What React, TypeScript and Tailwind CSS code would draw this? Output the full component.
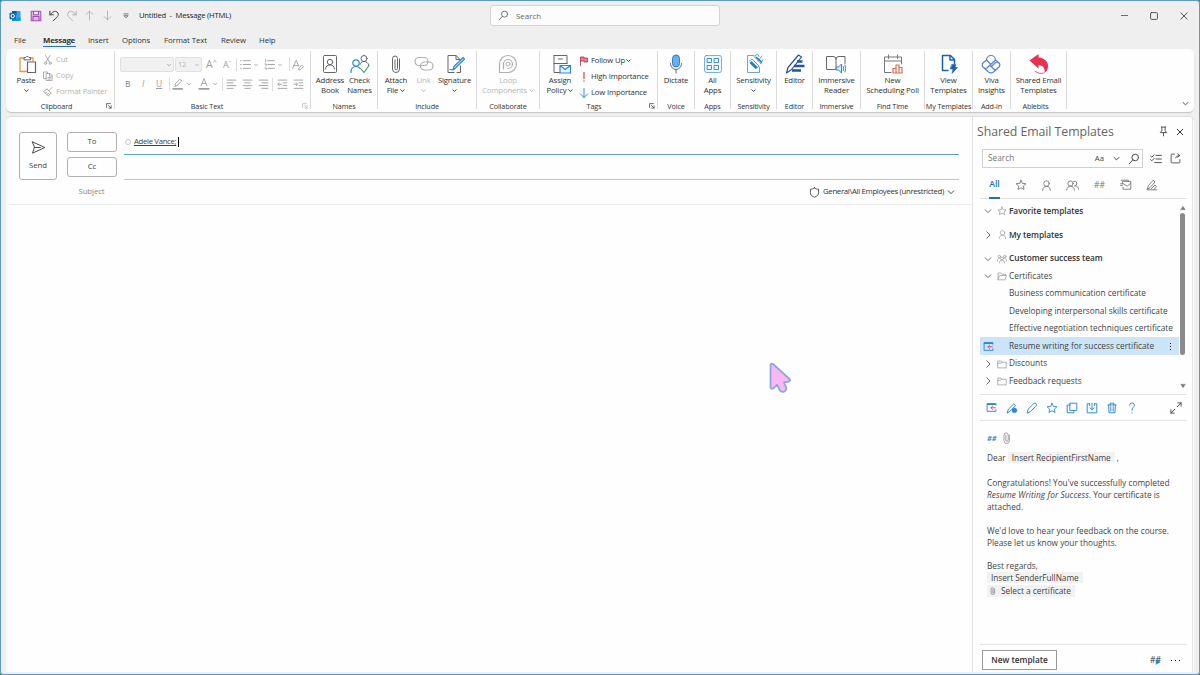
import type { ReactNode } from 'react';
import clsx from 'clsx';

interface IconProps {
  size?: number;
  className?: string;
  children?: ReactNode;
}

// icons are drawn on a 20x20 grid
function Icon({ size = 20, className, children }: IconProps) {
  return (
    <svg
      width={size}
      height={size}
      viewBox="0 0 20 20"
      fill="none"
      stroke="currentColor"
      strokeLinecap="round"
      strokeLinejoin="round"
      className={clsx('shrink-0', className)}
    >
      {children}
    </svg>
  );
}

function Chevron({ dir = 'down', size = 6, className }: { dir?: 'down' | 'right'; size?: number; className?: string }) {
  return (
    <Icon size={size} className={className}>
      <path strokeWidth={18 / size} d={dir === 'down' ? 'M3 7l7 7 7-7' : 'M7 2l8 8-8 8'} />
    </Icon>
  );
}

const STAR = 'M10 2l2.4 5.3 5.8.6-4.3 3.9 1.2 5.7L10 14.6l-5.1 2.9 1.2-5.7L1.8 7.9l5.8-.6z';

const Star = ({ size = 12, className }: IconProps) => (
  <Icon size={size} className={className}><path strokeWidth={1.5} d={STAR} /></Icon>
);

const Person = ({ size = 12, className }: IconProps) => (
  <Icon size={size} className={className}>
    <g strokeWidth={1.5}><circle cx="10" cy="6.500" r="5" /><path d="M3 19c.3-5 2.500-7.500 7-7.500s6.700 2.500 7 7.500" /></g>
  </Icon>
);

const People = ({ size = 12, className }: IconProps) => (
  <Icon size={size} className={className}>
    <g strokeWidth={1.4}><circle cx="7" cy="7" r="4" /><path d="M1 17c.4-4 3-6 6-6s5.600 2 6 6M12 3.500a3.600 3.600 0 1 1 1.500 7M14 10.500c3 0 5 2 5.300 5" /></g>
  </Icon>
);

const Team = ({ size = 11, className }: IconProps) => (
  <Icon size={size} className={className}>
    <g strokeWidth={1.4}>
      <circle cx="10" cy="9" r="3" /><path d="M5 18c0-4 2-6 5-6s5 2 5 6" />
      <circle cx="4.500" cy="5" r="2.600" /><circle cx="15.500" cy="5" r="2.600" />
      <path d="M1 14c0-4 1.500-6 4-6M19 14c0-4-1.500-6-4-6" />
    </g>
  </Icon>
);

const Folder = ({ open, className }: { open?: boolean; className?: string }) => (
  <Icon size={10} className={className}>
    <path strokeWidth={1.5} d={open ? 'M2 17V4h6l2 2.500h7V9M2 17L5 9h14l-3 8z' : 'M1.500 17V4h6l2 2.500h9V17zM1.500 8.500h6l2-2'} />
  </Icon>
);

const Magnifier = ({ size = 12, className }: IconProps) => (
  <Icon size={size} className={className}><g strokeWidth={1.600}><circle cx="12" cy="7.500" r="5.500" /><path d="M8 11.500L2 18" /></g></Icon>
);

const Clip = ({ size = 12, className }: IconProps) => (
  <Icon size={size} className={className}>
    <path strokeWidth={1.500} d="M8 5.500v8a2 2 0 0 0 4 0V5a3.500 3.500 0 0 0-7 0v9.500a4.500 4.500 0 0 0 9 0V5" />
  </Icon>
);

// window with a red arrow, used for "insert template"
const InsertTemplate = () => (
  <Icon size={11}>
    <path stroke="#2b88d8" strokeWidth={1.700} d="M18 6V3H2v14h16v-3" />
    <path stroke="#2b88d8" strokeWidth={3} d="M3 4h14" />
    <path stroke="#e8405c" strokeWidth={1.700} d="M17 10.500H9M12 7.500l-3 3 3 3" />
  </Icon>
);

const Launcher = ({ className }: { className?: string }) => (
  <Icon size={6} className={className}><path strokeWidth={2.500} d="M2 15V2h13M8 8l9 9M17 9v8H9" /></Icon>
);

interface GroupProps {
  label: string;
  className: string;
  labelClassName?: string;
  launcher?: 'dark' | 'light';
  children: ReactNode;
}

function Group({ label, className, labelClassName, launcher, children }: GroupProps) {
  return (
    <div className={clsx('relative mt-[2px] flex h-[58px] shrink-0 flex-col border-r border-[#dcdcdc]', className)}>
      <div className="flex h-[50px] shrink-0 justify-center">{children}</div>
      <div className={clsx('text-center text-[7.200px] leading-[10px] tracking-[-0.12px] whitespace-nowrap text-[#333]', labelClassName)}>{label}</div>
      {launcher && (
        <Launcher className={clsx('absolute right-[2px] bottom-0', launcher === 'dark' ? 'text-[#444]' : 'text-[#bbb]')} />
      )}
    </div>
  );
}

interface BigButtonProps {
  icon: ReactNode;
  lines: string[];
  caret?: 'inline' | 'below';
  disabled?: boolean;
  className?: string;
}

function BigButton({ icon, lines, caret, disabled, className }: BigButtonProps) {
  return (
    <div className={clsx('flex shrink-0 flex-col items-center text-[7.800px] leading-[10px] tracking-[-0.17px] whitespace-nowrap', disabled ? 'text-[#b8b8b8]' : 'text-[#333]', className)}>
      <div className="mt-[3px] mb-px h-5">{icon}</div>
      {lines.map((line, i) => (
        <div key={line} className="flex items-center gap-[2px]">
          {line}
          {caret === 'inline' && i === lines.length - 1 && <Chevron size={5} />}
        </div>
      ))}
      {caret === 'below' && <div className="flex h-[11px] items-center"><Chevron size={5} /></div>}
    </div>
  );
}

function TitleBar() {
  const cell = 'flex w-[18px] justify-center';
  return (
    <div className="flex h-[31px] shrink-0 items-center pl-[9px]">
      <svg width="12" height="12" viewBox="0 0 12 12" className="shrink-0">
        <rect x="3" y="1" width="8.500" height="10" rx="1" fill="#28a8ea" />
        <rect x="3" y="1" width="4.500" height="4" fill="#0358a7" />
        <path d="M3 7l4.500 2 4-2v4H3z" fill="#1490df" />
        <rect x=".5" y="2.800" width="6.500" height="6.500" rx=".8" fill="#0f6cbd" />
        <circle cx="3.750" cy="6" r="1.700" fill="none" stroke="#fff" strokeWidth="1" />
      </svg>
      <div className="ml-[5.500px] flex items-center text-[#b0b0b0]">
        <div className={cell}>
          <Icon size={12} className="text-[#a04fb0]"><path fill="#e3b5ea" strokeWidth={1.700} d="M2 2h15l1 1v15H2zM6 2v6h8V2M5 18v-7h10v7" /></Icon>
        </div>
        <div className={cell}>
          <Icon size={12} className="text-[#444]"><path strokeWidth={1.600} d="M3 2v6h6M3 8l5-4.500c3-2.300 7-1.500 8.500 1.500s.5 5-1.500 7L8.500 18" /></Icon>
        </div>
        <div className={cell}>
          <Icon size={12}><path strokeWidth={1.600} d="M17 2v6h-6M17 8l-5-4.500C9 1.200 5 2 3.500 5s-.5 5 1.500 7l6 6" /></Icon>
        </div>
        <div className={cell}><Icon size={11}><path strokeWidth={1.600} d="M10 18V2M4 8l6-6 6 6" /></Icon></div>
        <div className={cell}><Icon size={11}><path strokeWidth={1.600} d="M10 2v16M4 12l6 6 6-6" /></Icon></div>
        <div className={cell}><Icon size={6} className="text-[#555]"><path strokeWidth={2.500} d="M3 3h14M4 10l6 6 6-6z" /></Icon></div>
      </div>
      <div className="ml-[4.500px] w-[351px] text-[7.600px] tracking-[-0.17px] whitespace-pre text-[#222]">Untitled  -  Message (HTML)</div>
      <div className="flex h-[21px] w-[230px] items-center gap-[7px] rounded-[3px] border border-[#d4d4d4] bg-[#fcfcfc] pl-[7px] text-[8px] tracking-[-0.05px] text-[#666]">
        <Magnifier size={11} />
        Search
      </div>
      <div className="ml-auto flex items-center pr-[1px] text-[#444]">
        <div className="flex w-[30px] justify-center"><Icon size={7}><path strokeWidth={2.200} d="M1 10h18" /></Icon></div>
        <div className="flex w-[30px] justify-center"><Icon size={8}><rect x="1.500" y="1.500" width="17" height="17" rx="2.500" strokeWidth={2.200} /></Icon></div>
        <div className="flex w-[30px] justify-center"><Icon size={8}><path strokeWidth={2.200} d="M2 2l16 16M18 2L2 18" /></Icon></div>
      </div>
    </div>
  );
}

function MenuTabs() {
  return (
    <div className="flex h-[18px] shrink-0 pl-[14px] text-[7.800px] leading-[19px] tracking-[-0.08px] whitespace-nowrap text-[#333]">
      <div className="w-[29px]">File</div>
      <div className="w-[45px]">
        <div className="h-[16px] w-[33px] border-b-[1.500px] border-[#2a70b8] font-bold tracking-[-0.2px] text-[#333]">Message</div>
      </div>
      <div className="w-[34px]">Insert</div>
      <div className="w-[42px]">Options</div>
      <div className="w-[57px]">Format Text</div>
      <div className="w-[38px]">Review</div>
      <div>Help</div>
    </div>
  );
}

function ClipboardGroup() {
  const row = 'flex h-4 items-center gap-[3px]';
  return (
    <Group label="Clipboard" className="w-[109px]" labelClassName="pr-[7px]" launcher="dark">
      <BigButton
        className="w-[40px]"
        lines={['Paste']}
        caret="below"
        icon={
          <Icon className="ml-[3px]">
            <path stroke="#e8973a" strokeWidth={1.300} d="M9 17.500H2V4h4M12 4h3v3" />
            <path stroke="#666" d="M6 5.500V3.500h1.500a2 2 0 0 1 3.500 0h1.500v2z" />
            <path stroke="#666" strokeWidth={1.200} fill="#fff" d="M9.500 8h8v10.500h-8z" />
          </Icon>
        }
      />
      <div className="-ml-[3px] flex-1 pt-px text-[7.700px] tracking-[-0.17px] whitespace-nowrap text-[#b4b4b4]">
        <div className={row}>
          <Icon size={10} className="text-[#999]"><path strokeWidth={1.600} d="M5 1l8 13M14 1L6 14" /><circle cx="5" cy="16.500" r="2.300" strokeWidth={1.600} /><circle cx="14.500" cy="16.500" r="2.300" strokeWidth={1.600} /></Icon>
          Cut
        </div>
        <div className={row}>
          <Icon size={10} className="text-[#9a9a9a]"><path strokeWidth={1.600} d="M6 15H1V2h8v3M7 5h7l4 4v10H7zM13 5v5h5M10 13h5M10 16h5" /></Icon>
          Copy
        </div>
        <div className={row}>
          <Icon size={10} className="text-[#999]"><path strokeWidth={1.600} d="M18 1l-6 6M8 4l8 8M8 4L1 9l10 9 5-6M5 12l3-2M8 15l3-2" /></Icon>
          <span className="-mr-[5px]">Format Painter</span>
        </div>
      </div>
    </Group>
  );
}

function Lines({ d, caret = false }: { d: string; caret?: boolean }) {
  return (
    <>
      <Icon size={11}><path strokeWidth={1.700} d={d} /></Icon>
      {caret && <Chevron size={4} className="mx-[3px]" />}
    </>
  );
}

function BasicTextGroup() {
  const divider = 'h-[13px] w-px bg-[#dedede]';
  return (
    <Group label="Basic Text" className="w-[196px]" labelClassName="pr-[11px]" launcher="light">
      <div className="w-full pl-[5px] text-[#a0a0a0]">
        <div className="mt-[6px] flex h-[15px] items-center">
          <div className="flex h-[15px] w-[54px] items-center justify-end rounded-[2px] border border-[#e0e0e0] bg-[#f1f1f1] pr-[2px]"><Chevron size={4} /></div>
          <div className="ml-[1px] flex h-[15px] w-[27px] items-center justify-between rounded-[2px] border border-[#e0e0e0] bg-[#f1f1f1] px-[2px] text-[7.500px] tracking-[-0.2px] text-[#b8b8b8]">12<Chevron size={4} /></div>
          <div className="ml-[4px] w-[17px] text-[10.500px] leading-none">A<sup className="text-[7px]">^</sup></div>
          <div className="w-[13px] text-[9px] leading-none">A<sup className="text-[6px]">ˇ</sup></div>
          <div className={clsx(divider, 'mr-[3px]')} />
          <Lines caret d="M1 3h1M6 3h13M1 10h1M6 10h13M1 17h1M6 17h13" />
          <div className="w-[3px]" />
          <Lines caret d="M3 1v4M7 3h12M2 9h2v3M7 10h12M2 16h2v3M7 17h12" />
          <div className={clsx(divider, 'mr-[2px] ml-[4px]')} />
          <Icon size={12}><path strokeWidth={1.500} d="M1 16L7 2l4 10M3 11h7M11 16l5-6 3 3-5 5h-2z" /></Icon>
        </div>
        <div className="mt-[5px] flex h-[14px] items-center text-[8.500px]">
          <div className="w-[16px] pl-[5px] font-semibold">B</div>
          <div className="w-[16px] pl-[6px] italic">I</div>
          <div className="w-[17px] pl-[4px] underline">U</div>
          <div className={clsx(divider, 'mr-[2px]')} />
          <Icon size={12}><path strokeWidth={1.500} d="M6 13l-1-3 8-8 3 3-7 7zM4 14l2-1" /><path strokeWidth={3} d="M2 18h15" /></Icon>
          <Chevron size={4} className="mx-[3px]" />
          <div className="ml-[4px]"><Icon size={12}><path strokeWidth={1.500} d="M5 13L10 1l5 12M7 9h6" /><path strokeWidth={3} d="M2 18h16" /></Icon></div>
          <Chevron size={4} className="mx-[3px]" />
          <div className={clsx(divider, 'mr-[3px] ml-[2px]')} />
          <div className="flex items-center gap-[5px]">
            <Lines d="M2 2h16M2 7h11M2 12h16M2 17h11" />
            <Lines d="M2 2h16M5 7h10M2 12h16M5 17h10" />
            <Lines d="M2 2h16M7 7h11M2 12h16M7 17h11" />
          </div>
          <div className={clsx(divider, 'mr-[4px] ml-[3px]')} />
          <div className="flex items-center gap-[5px]">
            <Lines d="M2 2h16M11 7h7M11 12h7M2 17h16M8 9.500H2M4 7l-2 2.500L4 12" />
            <Lines d="M2 2h16M11 7h7M11 12h7M2 17h16M2 9.500h6M6 7l2 2.500L6 12" />
          </div>
        </div>
      </div>
    </Group>
  );
}

function TagsGroup() {
  const row = 'flex h-4 items-center gap-[2px]';
  return (
    <Group label="Tags" className="w-[118px]" labelClassName="pr-[9px]" launcher="dark">
      <BigButton
        className="w-[38px]"
        lines={['Assign', 'Policy']}
        caret="inline"
        icon={
          <Icon className="ml-px">
            <path stroke="#666" d="M3 1.500h13v8M3 1.500v17h6M3 9.500h13M7.500 5h4" />
            <path stroke="#2b88d8" strokeWidth={1.200} fill="#e8f3fc" d="M9 11.500h10.500v7.500H9zM9 11.500l5.200 4 5.300-4" />
          </Icon>
        }
      />
      <div className="w-[77px] pt-[1.500px] text-[7.700px] tracking-[-0.15px] whitespace-nowrap text-[#333]">
        <div className={row}>
          <Icon size={10}><path stroke="#c4314b" fill="#e87a8a" strokeWidth={1.700} d="M3 19V2h7v2h7v8h-7v-2H3" /></Icon>
          Follow Up <Chevron size={5} className="-ml-px" />
        </div>
        <div className={row}>
          <Icon size={10}><path stroke="#e0532f" strokeWidth={2.600} d="M10 1v12M10 18v.5" /></Icon>
          High Importance
        </div>
        <div className={row}>
          <Icon size={10}><path stroke="#2b88d8" strokeWidth={1.900} d="M10 1v18M3 12l7 7 7-7" /></Icon>
          Low Importance
        </div>
      </div>
    </Group>
  );
}

function Ribbon() {
  return (
    <div className="mx-[6px] flex h-[63px] shrink-0 rounded-[5px] bg-[#fefefe] shadow-[0_1px_1px_#c4c4c4]">
      <ClipboardGroup />
      <BasicTextGroup />
      <Group label="Names" className="w-[67px]">
        <BigButton
          className="w-[31px]"
          lines={['Address', 'Book']}
          icon={
            <Icon className="text-[#666]"><rect x="3.500" y="1.500" width="13" height="17" rx="1" /><circle cx="10" cy="8" r="2.700" /><path d="M5.500 15c.5-3 2-4 4.500-4s4 1 4.500 4" /></Icon>
          }
        />
        <BigButton
          className="w-[28px]"
          lines={['Check', 'Names']}
          icon={
            <Icon>
              <g stroke="#666"><circle cx="14" cy="4.500" r="3" /><path d="M10 10.500c.5-2 2-3 4-3s4.500 1 4.800 4" /></g>
              <g stroke="#2b88d8" strokeWidth={1.200}><circle cx="6" cy="9" r="3.200" /><path d="M1 18.500c0-4 2-6 5-6 1.500 0 3 .5 4 1.800" /></g>
              <path stroke="#3a9a5c" strokeWidth={1.100} d="M10.500 14.500l3.500 4 5-7" />
            </Icon>
          }
        />
      </Group>
      <Group label="Include" className="w-[99px]">
        <BigButton
          className="w-[29px]"
          lines={['Attach', 'File']}
          caret="inline"
          icon={<Icon className="text-[#666]"><path d="M13.500 5v10a3.500 3.500 0 0 1-7 0V4.500a2.500 2.500 0 0 1 5 0v10a1.200 1.200 0 0 1-2.500 0V6" /></Icon>}
        />
        <BigButton
          className="w-[26px]"
          lines={['Link']}
          caret="below"
          disabled
          icon={<Icon className="text-[#b0b0b0]"><rect x="1" y="3.500" width="13" height="8" rx="4" strokeWidth={1.200} /><rect x="6.500" y="8" width="12.500" height="8" rx="4" strokeWidth={1.200} /></Icon>}
        />
        <BigButton
          className="w-[36px]"
          lines={['Signature']}
          caret="below"
          icon={
            <Icon className="ml-px">
              <path stroke="#666" d="M9 18.500H3v-17h8l4 4M11 1.500v4h4M15.500 12v6.500H12" />
              <path stroke="#2b88d8" strokeWidth={1.200} fill="#d6eafa" d="M8 16l1-3.500 9-9 1.500 1.500-9 9zM5 15.500l3 .5" />
            </Icon>
          }
        />
      </Group>
      <Group label="Collaborate" className="w-[63px]">
        <BigButton
          lines={['Loop', 'Components']}
          caret="inline"
          disabled
          icon={<Icon className="text-[#b0b0b0]"><path strokeWidth={1.200} d="M1.500 18.500V10a8.500 8.500 0 1 1 8.500 8.500zM5.500 15V10a4.500 4.500 0 1 1 4.500 4.500" /><circle cx="10" cy="10" r="2" /></Icon>}
        />
      </Group>
      <TagsGroup />
      <Group label="Voice" className="w-[37px]">
        <BigButton
          lines={['Dictate']}
          icon={<Icon><rect x="6.500" y="1" width="7" height="12" rx="3.500" fill="#69aee8" stroke="#2b7cd3" /><path stroke="#666" d="M4.500 9.500c0 8 11 8 11 0M10 15.500v3.500" /></Icon>}
        />
      </Group>
      <Group label="Apps" className="w-[36px]">
        <BigButton
          lines={['All', 'Apps']}
          icon={
            <Icon className="text-[#2b7cd3]"><rect x="1.500" y="1.500" width="17" height="17" rx="2" fill="#f0f7fd" strokeOpacity=".6" /><path strokeOpacity=".85" d="M4.500 4.500h4v4h-4zM11.500 4.500h4v4h-4zM4.500 11.500h4v4h-4zM11.500 11.500h4v4h-4z" /></Icon>
          }
        />
      </Group>
      <Group label="Sensitivity" className="w-[46px]">
        <BigButton
          lines={['Sensitivity']}
          caret="below"
          icon={
            <Icon className="ml-[3px]">
              <path stroke="#6aa5d8" d="M9 1.500H2.500v17h12V13" />
              <path stroke="#1f7ccc" strokeWidth={2.800} strokeLinecap="butt" d="M5.500 8l6 6" />
              <path stroke="#5aa3e0" d="M4.500 7l2.500-2 7 7-2.500 2.500M9.500 3l7 7M13 7l4-5M10 2.500a2 2 0 0 1 4 0M15.500 9.500l2.500-4" />
              <path stroke="#1f7ccc" strokeWidth={1.600} d="M11.500 3.500l5 4.500" />
            </Icon>
          }
        />
      </Group>
      <Group label="Editor" className="w-[36px]">
        <BigButton
          lines={['Editor']}
          icon={
            <Icon className="text-[#2255a8]">
              <path strokeWidth={1.200} d="M13.500 1l3 2L6.500 15.500 1.500 19 3 13.500z" />
              <path strokeWidth={2.400} strokeLinecap="butt" d="M12 7.500h5.500M9 12h10.500M7 16.500h9" />
            </Icon>
          }
        />
      </Group>
      <Group label="Immersive" className="w-[48px]">
        <BigButton
          lines={['Immersive', 'Reader']}
          icon={
            <Icon>
              <path stroke="#666" d="M9.500 15.500H.5v-13h6.500q3 0 3 2.500v9.500M10 5q0-2.500 3-2.500h6v7" />
              <path stroke="#2b88d8" fill="#dceefb" d="M10.500 13h2l3-3v9l-3-3h-2z" />
              <path stroke="#2b88d8" d="M17.300 12.500q1 2 0 4M19 11q1.500 3.500 0 7" />
            </Icon>
          }
        />
      </Group>
      <Group label="Find Time" className="w-[64px]">
        <BigButton
          lines={['New', 'Scheduling Poll']}
          icon={
            <Icon>
              <path stroke="#777" d="M8 18.500H1.500V3h17v7M1.500 7h17M5.500 1v3.500M14.500 1v3.500" />
              <path stroke="#e06a4e" strokeWidth={1.200} fill="#fff" d="M10 19v-4.500h3V19zM13 19v-8h3v8zM16 19v-5.500h3V19z" />
            </Icon>
          }
        />
      </Group>
      <Group label="My Templates" className="w-[48px]" labelClassName="-mx-px">
        <BigButton
          lines={['View', 'Templates']}
          icon={
            <Icon className="text-[#1a62b0]">
              <path strokeWidth={1.500} d="M9 16.500H3.500v-15h8l4 4v4M11 1.500v4.500h4.500" />
              <path fill="#1a62b0" strokeWidth={.6} d="M13 10.500h4l-1 3h2.500L13 19.500l1-4.500h-2.500z" />
            </Icon>
          }
        />
      </Group>
      <Group label="Add-in" className="w-[38px]">
        <BigButton
          lines={['Viva', 'Insights']}
          icon={
            <Icon className="text-[#5580d6]">
              <path strokeWidth={1.200} d="M5.500 6a4.500 4.500 0 0 1 9 0M5.500 6L2 9q-1.700 2 0 4l5.500 5q2.500 1.700 5 0L18 13q1.700-2 0-4l-3.500-3M5.500 6l3.500 3.500M14.500 6L6 14q-2 1-3.700-.7M18 9q-2-1.500-4 0l-3 3M9 11.500l5.500 5" />
            </Icon>
          }
        />
      </Group>
      <Group label="Ablebits" className="w-[56px]" labelClassName="pr-[6px]">
        <BigButton
          lines={['Shared Email', 'Templates']}
          icon={
            <Icon>
              <path fill="#e8304f" stroke="none" d="M.5 6.500L9.500 0v3.500C16 4 19.500 8 19 13c-.3 2.500-1.500 4.500-3.500 6 .8-4-1-8-6-8v3.500z" />
              <path stroke="#e8304f" strokeWidth={.8} d="M6 17.500q4 3 8.500 1.800" />
            </Icon>
          }
        />
      </Group>
      <div className="flex flex-1 items-end justify-end pr-[5px] pb-[5px]"><Chevron size={7} className="text-[#444]" /></div>
    </div>
  );
}

function Compose() {
  const field = 'flex h-[20px] w-[50px] items-center justify-center rounded-[3px] border border-[#b0b0b0]';
  return (
    <div className="min-w-0 flex-1 text-[7.800px] tracking-[-0.1px] text-[#444]">
      <div className="flex pt-[15px] pl-[13px]">
        <div className="flex h-[48px] w-[38px] flex-col items-center justify-center gap-[5px] rounded-[3px] border border-[#b0b0b0] pb-[2px]">
          <Icon size={15}><path strokeWidth={1.300} d="M2 2.500l16.500 7.500L2 17.500 4.500 10zM4.500 10h8" /></Icon>
          <div className="leading-[10px]">Send</div>
        </div>
        <div className="ml-[10px] flex flex-col gap-[5px]">
          <div className={field}>To</div>
          <div className={field}>Cc</div>
        </div>
        <div className="ml-[7px] w-[835px]">
          <div className="flex h-[23px] items-center border-b border-[#5f9fd8] pb-[3px] pl-px">
            <div className="mr-[3px] h-[6px] w-[6px] rounded-full border border-[#c4cbd0]" />
            <span className="tracking-[-0.35px] underline">Adele Vance;</span>
            <div className="ml-[2px] h-[10px] w-px bg-black" />
          </div>
          <div className="h-[25px] border-b border-[#c4c4c4]" />
        </div>
      </div>
      <div className="ml-[4px] flex h-[25px] items-center border-b border-[#ececec] pr-[17px]">
        <div className="w-[163px] text-center text-[#888]">Subject</div>
        <div className="ml-auto flex items-center gap-[3px] text-[#333]">
          <Icon size={11}><path strokeWidth={1.500} d="M10 1.500c2.500 2 4.500 2.500 7.500 2.500v6c0 4.500-3 7-7.500 8.500C5.500 17 2.500 14.500 2.500 10V4C5.500 4 7.500 3.500 10 1.500z" /></Icon>
          <span className="tracking-[-0.33px]">General\All Employees (unrestricted)</span>
          <Chevron size={8} />
        </div>
      </div>
    </div>
  );
}

interface TreeNode {
  label: string;
  state?: 'open' | 'closed';
  icon?: ReactNode;
  root?: boolean;
  selected?: boolean;
}

const tree: TreeNode[] = [
  { label: 'Favorite templates', state: 'open', icon: <Star size={10} />, root: true },
  { label: 'My templates', state: 'closed', icon: <Person size={9} />, root: true },
  { label: 'Customer success team', state: 'open', icon: <Team size={10} />, root: true },
  { label: 'Certificates', state: 'open', icon: <Folder open /> },
  { label: 'Business communication certificate' },
  { label: 'Developing interpersonal skills certificate' },
  { label: 'Effective negotiation techniques certificate' },
  { label: 'Resume writing for success certificate', selected: true },
  { label: 'Discounts', state: 'closed', icon: <Folder /> },
  { label: 'Feedback requests', state: 'closed', icon: <Folder /> },
];

function TemplateTree() {
  return (
    <div className="flex h-[196px] border-b border-[#e4e4e4] pt-[3.400px]">
      <div className="w-[199px]">
        {tree.map((node) => (
          <div
            key={node.label}
            className={clsx(
              'flex h-[17.500px] items-center pl-[4px] whitespace-nowrap text-[#444]',
              node.root && node.label !== 'Customer success team' && 'mb-[6.200px]',
              node.selected && 'bg-[#cce4f7]'
            )}
          >
            <div className="flex w-[13px] shrink-0 items-center text-[#555]">
              {node.state && <Chevron size={8} dir={node.state === 'open' ? 'down' : 'right'} />}
              {node.selected && <div className="-ml-px"><InsertTemplate /></div>}
            </div>
            <div className="mr-[2px] flex w-[10px] shrink-0 justify-center text-[#999]">{node.icon}</div>
            <div className={clsx('text-[8.300px]', node.root && 'font-semibold tracking-[-0.05px] text-[#333]')}>{node.label}</div>
            {node.selected && (
              <div className="mr-[8px] ml-auto flex flex-col gap-[2px]">
                <i className="h-px w-px bg-black" />
                <i className="h-px w-px bg-black" />
                <i className="h-px w-px bg-black" />
              </div>
            )}
          </div>
        ))}
      </div>
      <div className="flex w-[7px] flex-col items-center pt-[2.600px]">
        <Icon size={6} className="text-[#777]"><path fill="currentColor" d="M10 4l8 12H2z" /></Icon>
        <div className="mt-[2px] h-[142px] w-[5px] rounded-full bg-[#8a8a8a]" />
        <Icon size={6} className="mt-[28px] text-[#777]"><path fill="currentColor" d="M10 16L2 4h16z" /></Icon>
      </div>
    </div>
  );
}

function Toolbar() {
  return (
    <div className="flex h-[26px] items-center border-b border-[#e4e4e4] pr-[5px] pl-[7px] text-[#2b88d8]">
      <div className="flex items-center gap-[8px]">
        <div className="mr-px -ml-px"><InsertTemplate /></div>
        <Icon size={12}><path strokeWidth={1.600} d="M2 18l2-6 9-9 3 3-9 9z" /><circle cx="14" cy="14" r="4" fill="#2b88d8" /></Icon>
        <Icon size={12}><path strokeWidth={1.600} d="M2 18l1.500-6L13 2.500q2-1.500 3.500 0t1 3.500L8 15.500z" /></Icon>
        <Star size={12} />
        <Icon size={12}><path strokeWidth={1.600} d="M7 2h11v12H7zM7 5H2v13h11v-4" /></Icon>
        <Icon size={12}><path strokeWidth={1.600} d="M6 3H2v15h16V3h-4M10 2v11M6.500 9.500L10 13l3.500-3.500M6 3v3M14 3v3" /></Icon>
        <Icon size={12}><path strokeWidth={1.600} d="M3 5h14M7 5V2h6v3M4.500 5l.5 13h10l.5-13M8 8v7M12 8v7" /></Icon>
        <Icon size={12}><path strokeWidth={1.600} d="M6 5.500q0-4 4-4t4 4q0 2-2.500 4T10 14M10 18v.3" /></Icon>
      </div>
      <Icon size={12} className="ml-auto text-[#444]"><path strokeWidth={1.500} d="M12 8l6.500-6.500M13 1.500h5.500V7M8 12l-6.500 6.500M1.500 13v5.500H7" /></Icon>
    </div>
  );
}

function Preview() {
  return (
    <div className="h-[224px] border-b border-[#e4e4e4] pt-[11px] pl-[7px] text-[8.300px] leading-[12px] whitespace-nowrap text-[#444]">
      <div className="flex h-[12px] items-center gap-[4px]">
        <span className="text-[7.500px] font-bold text-[#2b88d8] italic">##</span>
        <Clip size={12} className="text-[#999]" />
      </div>
      <p className="mt-[8px]">Dear <span className="bg-[#f2f2f2] px-[4px] tracking-[-0.05px]">Insert RecipientFirstName</span> ,</p>
      <p className="mt-[13px]">Congratulations! You've successfully completed</p>
      <p><span className="tracking-[0.08px] italic">Resume Writing for Success</span>. Your certificate is</p>
      <p>attached.</p>
      <p className="mt-[12px]">We'd love to hear your feedback on the course.</p>
      <p>Please let us know your thoughts.</p>
      <p className="mt-[11px]">Best regards,</p>
      <p><span className="bg-[#f2f2f2] px-[4px] tracking-[-0.05px]">Insert SenderFullName</span></p>
      <p className="mt-px flex"><span className="flex items-center gap-[4px] bg-[#f2f2f2] pr-[4px] pl-[2px]"><Clip size={8} className="text-[#777]" />Select a certificate</span></p>
    </div>
  );
}

function TemplatesPane() {
  return (
    <div className="mr-px flex w-[221px] flex-col border-x border-[#e2e2e2] pr-[5px] pl-[7px]">
      <div className="-ml-[3px] flex h-[31px] items-center pr-[3px]">
        <h2 className="text-[12.300px] tracking-[-0.05px] whitespace-nowrap text-[#666]">Shared Email Templates</h2>
        <Icon size={11} className="mb-[2px] ml-auto text-[#444]"><path strokeWidth={1.600} d="M6 2h8M7 2v7l-3 3h12l-3-3V2M10 12v6" /></Icon>
        <Icon size={8} className="mb-[2px] ml-[7px] text-[#333]"><path strokeWidth={2.500} d="M3 3l14 14M17 3L3 17" /></Icon>
      </div>
      <div className="mt-[1px] ml-[2px] flex h-[19px] items-center">
        <div className="flex h-[19px] w-[161px] shrink-0 items-center border border-[#d0d0d0] pl-[5px] text-[8.300px] text-[#777]">
          Search
          <span className="ml-auto text-[7.700px] text-[#444]">Aa</span>
          <Chevron size={7} className="ml-[9px] text-[#333]" />
          <Magnifier size={12} className="mr-[2px] ml-[8px] text-[#444]" />
        </div>
        <Icon size={12} className="ml-[7px] text-[#444]"><path strokeWidth={1.500} d="M1 5l2 2 4-4M1 11l2 2 4-4M10 4h9M10 10h9M8 16h11" /></Icon>
        <Icon size={11} className="ml-[8px] text-[#444]"><path strokeWidth={1.600} d="M8 2H4q-2 0-2 2v12q0 2 2 2h12q2 0 2-2v-4M10 9q1-4 7-4.500M14 1.500l4 3-4 3" /></Icon>
      </div>
      <div className="flex h-[31px] items-center border-b border-[#e4e4e4] pt-[4px] text-[#777]">
        <div className="ml-[9px] flex h-[27px] w-[11px] items-center justify-center border-b-2 border-[#2a70b8] pt-[2px] text-[8.700px] font-semibold text-[#1f6fc0]">All</div>
        <Star size={12} className="ml-[15px]" />
        <Person size={11} className="ml-[14px]" />
        <People size={13} className="ml-[14px]" />
        <span className="ml-[15px] w-[12px] text-[8.500px]">##</span>
        <Icon size={12} className="ml-[14px]"><path strokeWidth={1.500} d="M4 8V4h14v13H5v-3M6 8l6 4 6-5M2 2h12v2M1 8h4M1 11h3" /></Icon>
        <Icon size={12} className="ml-[14px]"><path strokeWidth={1.500} d="M2 17l2-6 8-9 3 3-8 9zM2 18h16M9 16l6-6 2.500 2.500L13 18" /></Icon>
      </div>
      <TemplateTree />
      <Toolbar />
      <Preview />
      <div className="mt-[5px] flex items-center pr-[7px] pl-[2px]">
        <div className="flex h-[20px] w-[75px] items-center justify-center border border-[#9a9a9a] text-[8.300px] font-semibold text-[#333]">New template</div>
        <div className="relative mr-[10px] ml-auto text-[8.500px] text-[#333]">
          ##
          <Icon size={6} className="absolute right-[0px] bottom-[1px]"><path stroke="#1f80d0" fill="#1f80d0" d="M4 2l13 8-13 8z" /></Icon>
        </div>
        <div className="flex gap-[3px]">
          <i className="h-px w-px bg-black" />
          <i className="h-px w-px bg-black" />
          <i className="h-px w-px bg-black" />
        </div>
      </div>
    </div>
  );
}

export default function App() {
  return (
    <div className="relative h-[675px] w-[1200px] overflow-hidden bg-[#1f8a80] font-['Open_Sans','Noto_Sans',sans-serif]">
      <div className="flex h-[675px] w-[1200px] flex-col rounded-[4px] bg-[#efefef] shadow-[inset_0_0_0_1px_#5e97c9]">
        <TitleBar />
        <MenuTabs />
        <Ribbon />
        <div className="mx-[6px] mt-[5px] flex h-[555px] rounded-t-[5px] bg-[#fefefe] shadow-[0_-1px_1px_#dedede]">
          <Compose />
          <TemplatesPane />
        </div>
      </div>
      <svg width="24" height="34" viewBox="0 0 24 34" className="absolute top-[361px] left-[768px]">
        <path
          d="M2.500 3.500q.5-1.500 2.500-.5l16.500 15q1.500 1.500-.5 2.500l-5 .8 2.300 5.500q.3 3-3 4-2.500.5-3.500-1.500l-2.500-5.500-4 3.500q-2.500 1-2.800-1z"
          fill="#fab9f5"
          stroke="#8fa8dc"
          strokeWidth="1.800"
          strokeLinejoin="round"
        />
      </svg>
    </div>
  );
}
